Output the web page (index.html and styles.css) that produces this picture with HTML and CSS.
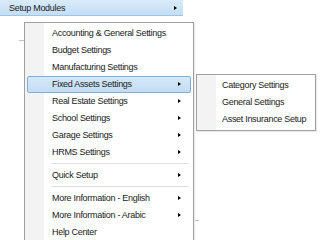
FILE: index.html
```html
<!DOCTYPE html>
<html lang="en">
<head>
    <meta charset="UTF-8">
    <title>Setup Modules</title>
    <link rel="stylesheet" href="styles.css">
</head>
<body>
    <div class="screen">
        <div class="top-item">
            <span>Setup Modules</span>
            <span class="arrow"></span>
        </div>
        <div class="tree-line tree-a"></div>
        <div class="tree-line tree-b"></div>

        <div class="menu main-menu">
            <div class="item">Accounting &amp; General Settings</div>
            <div class="item">Budget Settings</div>
            <div class="item">Manufacturing Settings</div>
            <div class="item active">Fixed Assets Settings<span class="arrow"></span></div>
            <div class="item">Real Estate Settings<span class="arrow"></span></div>
            <div class="item">School Settings<span class="arrow"></span></div>
            <div class="item">Garage Settings<span class="arrow"></span></div>
            <div class="item">HRMS Settings<span class="arrow"></span></div>
            <div class="separator"></div>
            <div class="item">Quick Setup<span class="arrow"></span></div>
            <div class="separator"></div>
            <div class="item">More Information - English<span class="arrow"></span></div>
            <div class="item">More Information - Arabic<span class="arrow"></span></div>
            <div class="item">Help Center</div>
        </div>

        <div class="menu sub-menu">
            <div class="item">Category Settings</div>
            <div class="item">General Settings</div>
            <div class="item">Asset Insurance Setup</div>
        </div>
    </div>
</body>
</html>
```

FILE: styles.css
```css
body {
    margin: 0;
    background-color: #ffffff;
    font-family: "Liberation Sans", Arial, sans-serif;
    font-size: 9px;
    letter-spacing: -0.3px;
    color: #1a1a1a;
}
.screen {
    position: relative;
    width: 320px;
    height: 240px;
    overflow: hidden;
}
.top-item {
    width: 174px;
    height: 15px;
    padding-left: 9px;
    display: flex;
    align-items: center;
    justify-content: space-between;
    background: linear-gradient(#d9ebfa, #c4def5);
    border-bottom: 1px solid #9fc3e6;
}
.top-item .arrow {
    position: static;
    margin-right: 6px;
}
.arrow {
    position: absolute;
    right: 10px;
    top: 6px;
    width: 0;
    height: 0;
    border-left: 3px solid #000000;
    border-top: 2.5px solid transparent;
    border-bottom: 2.5px solid transparent;
}
.tree-line {
    position: absolute;
    height: 1px;
    background-color: #b8c4d0;
}
.tree-a {
    left: 19px;
    top: 40px;
    width: 6px;
}
.tree-b {
    left: 195px;
    top: 220px;
    width: 4px;
}
.menu {
    position: absolute;
    border: 1px solid #a0a0a0;
    padding: 2px;
    background: linear-gradient(to right, #f3f3f3 0, #f3f3f3 19px, #ffffff 19px);
    box-shadow: 1px 1px 1px rgba(0, 0, 0, 0.08);
}
.main-menu {
    left: 24px;
    top: 22px;
    width: 164px;
    height: 216px;
}
.sub-menu {
    left: 196px;
    top: 74px;
    width: 114px;
    height: 51px;
}
.item {
    position: relative;
    height: 17px;
    line-height: 17px;
    padding-left: 25px;
    white-space: nowrap;
    box-sizing: border-box;
}
.sub-menu .item {
    padding-left: 23px;
}
.item.active {
    background: linear-gradient(#d4e8f9, #c3ddf5);
    border: 1px solid #84acdd;
    border-radius: 2px;
    line-height: 15px;
    padding-left: 24px;
}
.item.active .arrow {
    right: 9px;
    top: 5px;
}
.separator {
    height: 6px;
    margin-left: 24px;
    margin-right: 2px;
    background: linear-gradient(#ffffff 2px, #e0e0e0 2px, #e0e0e0 3px, #ffffff 3px);
}
```
